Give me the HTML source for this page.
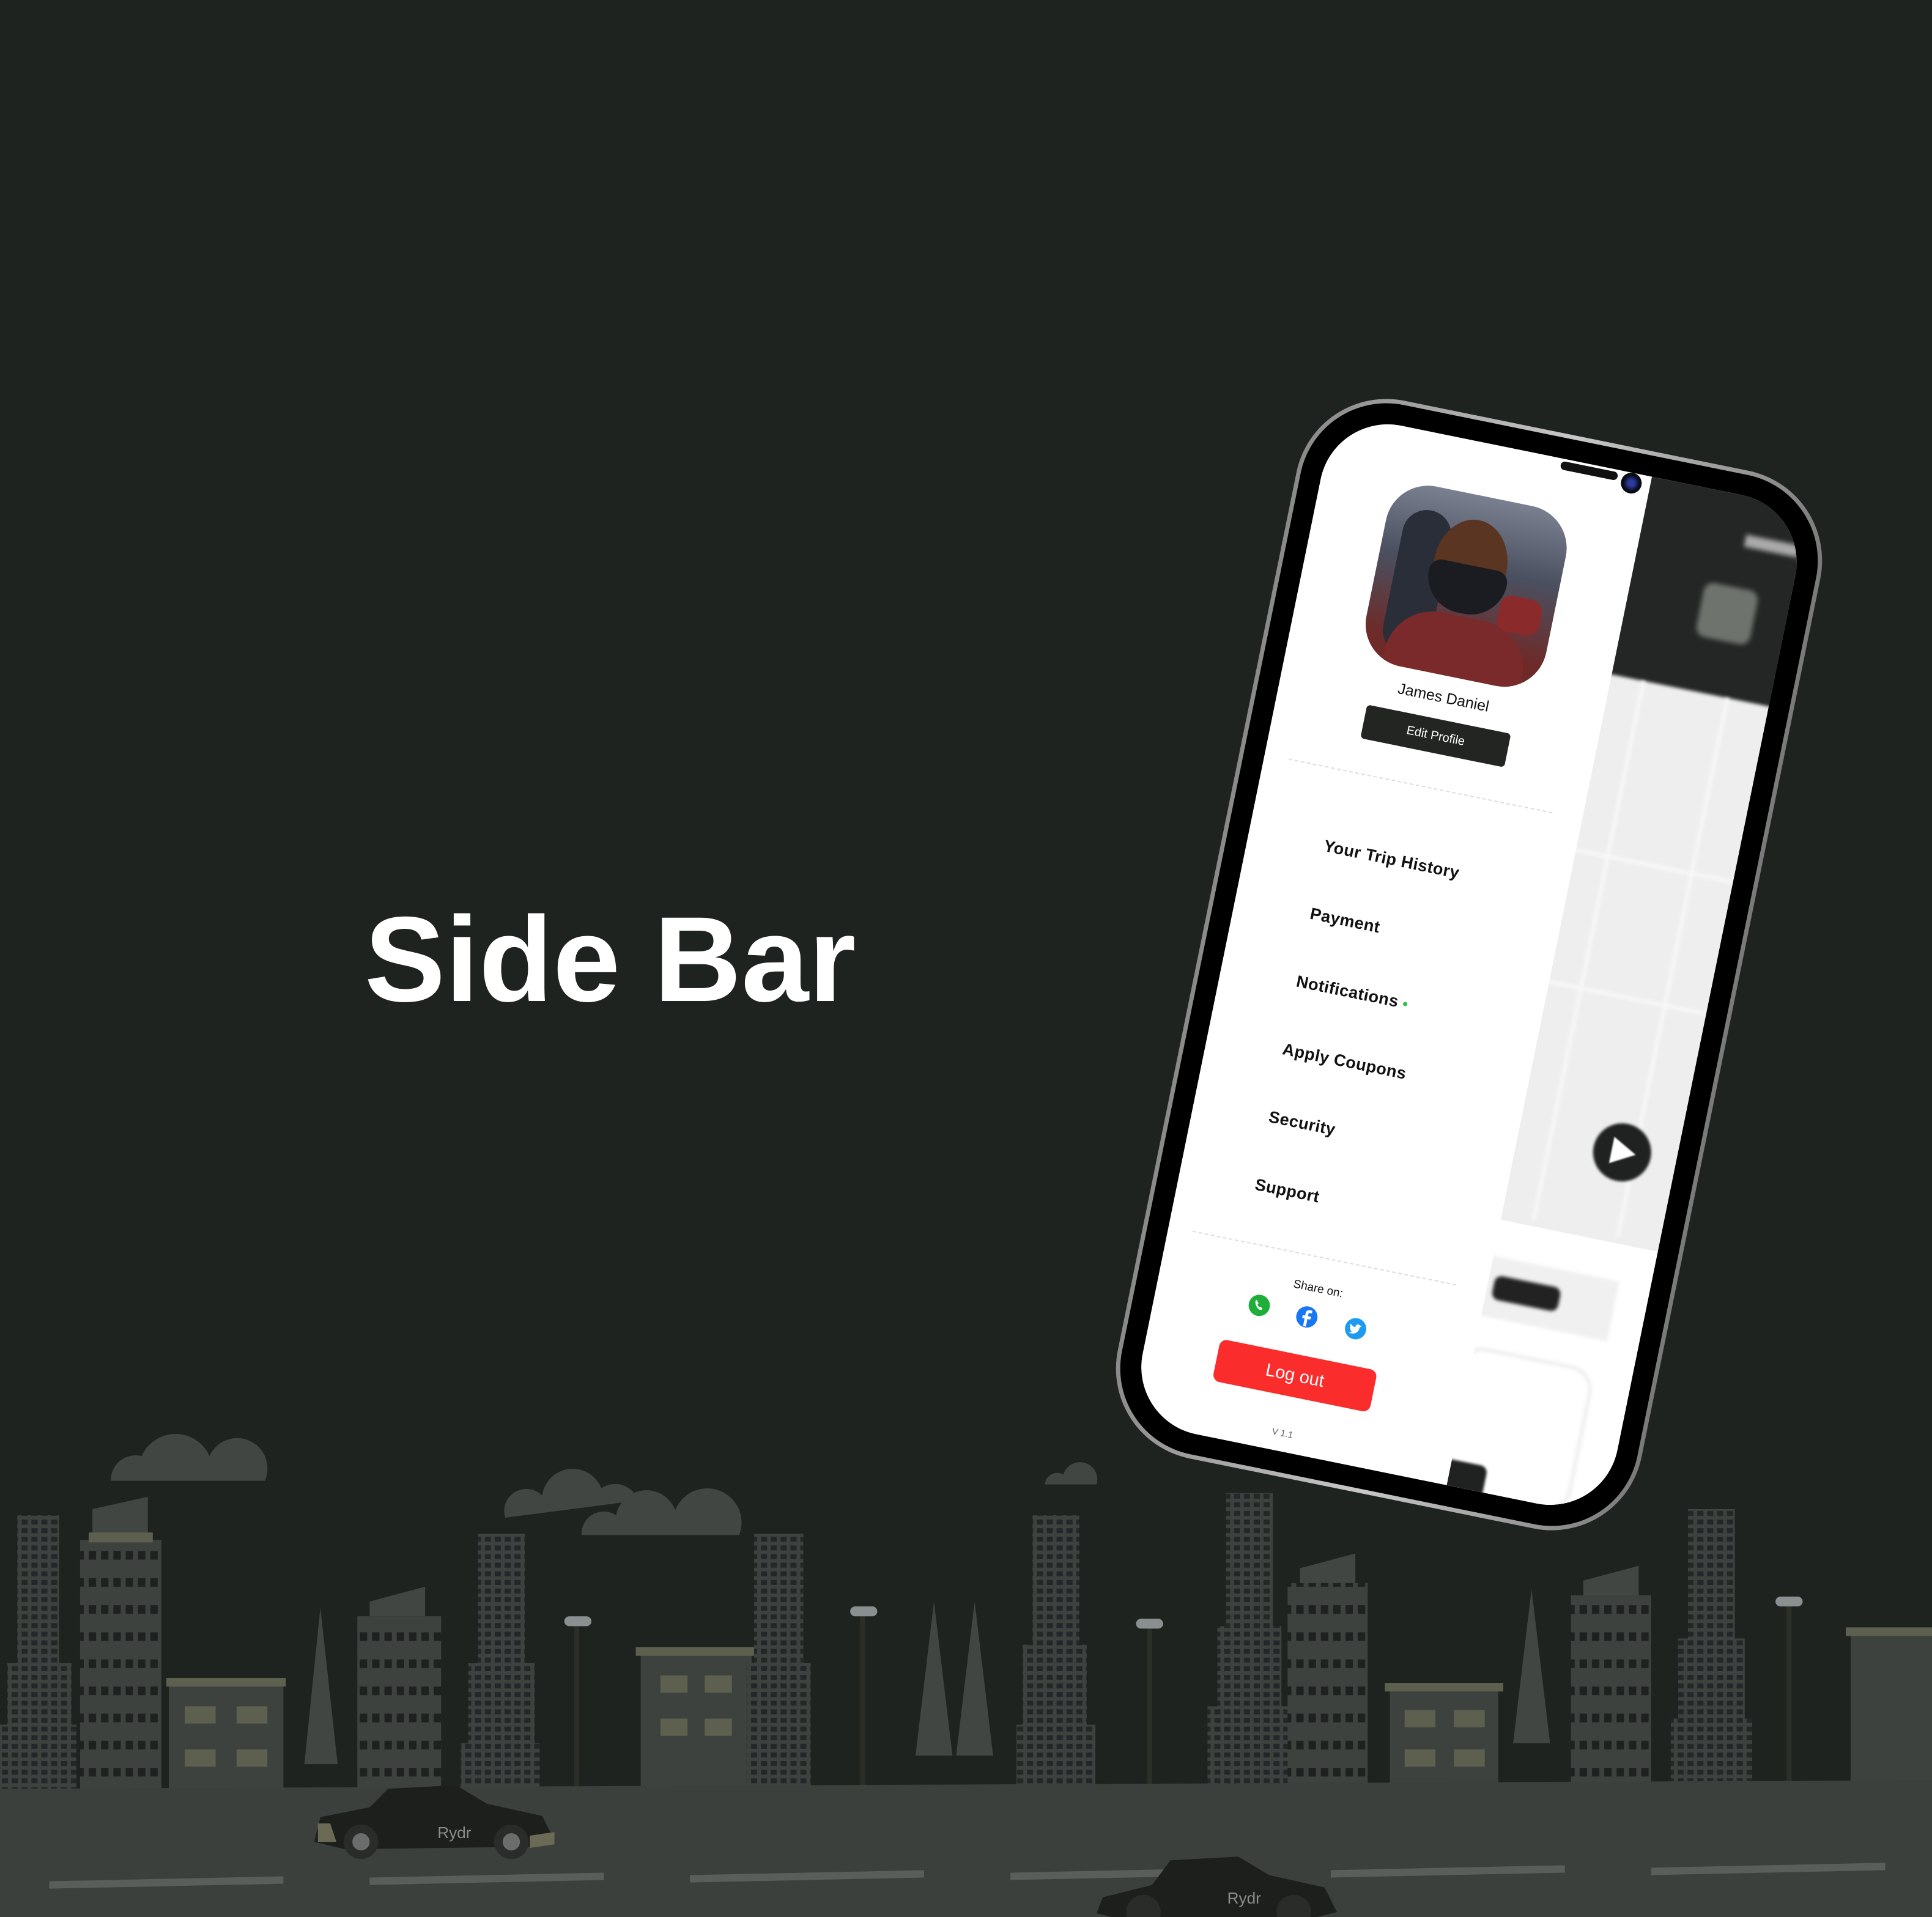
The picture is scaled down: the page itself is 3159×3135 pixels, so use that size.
<!DOCTYPE html>
<html><head><meta charset="utf-8"><style>
html,body{margin:0;padding:0}
body{width:3159px;height:3135px;background:#1f2320;position:relative;overflow:hidden;font-family:"Liberation Sans",sans-serif}
.title{position:absolute;left:596px;top:1470px;font-size:198px;font-weight:bold;color:#fff;line-height:1}
.city{position:absolute;left:0;top:2216px;width:3159px;height:919px;z-index:1}
.phone{position:absolute;left:1965px;top:695px;width:874px;height:1765px;transform:rotate(11.5deg);border-radius:150px;background:linear-gradient(90deg,#8a8a8a,#c8c8c8 50%,#7a7a7a);z-index:5}
.bez{position:absolute;inset:7px;border-radius:143px;background:#000}
.scr{position:absolute;left:34px;top:34px;right:34px;bottom:34px;border-radius:112px;background:#f4f4f4;overflow:hidden}
.abs{position:absolute}
.side{position:absolute;left:0;top:0;width:530px;height:100%;background:#fff}
.menu{position:absolute;left:125px;font-size:27px;color:#111;font-weight:bold;letter-spacing:.5px}
.dash{position:absolute;height:0;border-top:2px dashed #ddd}
</style></head><body>
<div class="title">Side Bar</div>

<div class="phone"><div class="bez"><div class="scr">
  <div class="abs" style="left:480px;top:0;width:360px;height:340px;background:#232624"></div>
  <div class="abs" style="left:480px;top:330px;width:360px;height:920px;background:#eeeeee;filter:blur(3px)"></div>
  <div class="abs" style="left:580px;top:330px;width:6px;height:900px;background:#f8f8f8;filter:blur(3px)"></div>
  <div class="abs" style="left:720px;top:330px;width:6px;height:900px;background:#f8f8f8;filter:blur(3px)"></div>
  <div class="abs" style="left:480px;top:620px;width:360px;height:6px;background:#f8f8f8;filter:blur(3px)"></div>
  <div class="abs" style="left:480px;top:840px;width:360px;height:6px;background:#f8f8f8;filter:blur(3px)"></div>
  <div class="abs" style="left:650px;top:150px;width:90px;height:90px;border-radius:16px;background:#6f736d;filter:blur(4px)"></div>
  <div class="abs" style="left:700px;top:62px;width:90px;height:20px;background:#aaa;filter:blur(4px)"></div>
  <div class="abs" style="left:655px;top:1045px;width:95px;height:95px;border-radius:50%;background:#1f2220;filter:blur(2px)"></div>
  <div class="abs" style="left:685px;top:1070px;width:0;height:0;border-left:40px solid #fff;border-top:22px solid transparent;border-bottom:22px solid transparent;filter:blur(1px)"></div>
  <div class="abs" style="left:480px;top:1240px;width:360px;height:520px;background:#fff"></div>
  <div class="abs" style="left:520px;top:1300px;width:220px;height:100px;background:#f0f0f0;filter:blur(3px)"></div>
  <div class="abs" style="left:540px;top:1330px;width:110px;height:40px;border-radius:12px;background:#222;filter:blur(3px)"></div>
  <div class="abs" style="left:510px;top:1450px;width:210px;height:230px;border-radius:40px;border:6px solid #eee;filter:blur(3px)"></div>
  <div class="abs" style="left:490px;top:1640px;width:100px;height:80px;border-radius:12px;background:#1f2220;filter:blur(2px)"></div>
  <div class="side"></div>
  <div class="abs" style="left:380px;top:4px;width:95px;height:14px;border-radius:8px;background:#111"></div>
  <div class="abs" style="left:482px;top:0;width:34px;height:34px;border-radius:50%;background:radial-gradient(circle,#2a3aa0 20%,#0a0a14 55%)"></div>
  <div class="abs" style="left:118px;top:86px;width:300px;height:300px;border-radius:70px;overflow:hidden;background:linear-gradient(180deg,#7a8090 0%,#4a5060 40%,#6e2a28 85%)">
    <div class="abs" style="left:30px;top:40px;width:80px;height:240px;background:#2a2e38;border-radius:40px"></div>
    <div class="abs" style="left:90px;top:40px;width:120px;height:150px;border-radius:50%;background:#5a3522"></div>
    <div class="abs" style="left:85px;top:115px;width:130px;height:80px;border-radius:20px 20px 60px 60px;background:#1a1c22"></div>
    <div class="abs" style="left:40px;top:200px;width:230px;height:120px;border-radius:80px 80px 0 0;background:#7a2a2a"></div>
    <div class="abs" style="left:210px;top:150px;width:70px;height:60px;background:#8b2a2a;border-radius:20px"></div>
  </div>
  <div class="abs" style="left:158px;top:408px;width:220px;text-align:center;font-size:25px;color:#111">James Daniel</div>
  <div class="abs" style="left:148px;top:458px;width:240px;height:56px;background:#222522;border-radius:6px;color:#fff;font-size:20px;text-align:center;line-height:56px">Edit Profile</div>
  <div class="dash" style="left:40px;top:570px;width:440px"></div>
  <div class="menu" style="top:683px">Your Trip History</div>
  <div class="menu" style="top:796px">Payment</div>
  <div class="menu" style="top:909px">Notifications <span style="display:inline-block;width:7px;height:7px;border-radius:50%;background:#2ec04a;vertical-align:middle"></span></div>
  <div class="menu" style="top:1022px">Apply Coupons</div>
  <div class="menu" style="top:1135px">Security</div>
  <div class="menu" style="top:1248px">Support</div>
  <div class="dash" style="left:40px;top:1358px;width:440px"></div>
  <div class="abs" style="left:160px;top:1400px;width:200px;text-align:center;font-size:19px;color:#111">Share on:</div>
  <svg class="abs" style="left:152px;top:1437px" width="38" height="38" viewBox="0 0 24 24"><circle cx="12" cy="12" r="11" fill="#1fae3a"/><path d="M8 7c-1 1-1 3 1 6s5 4 6 3l1-1-2-2-1 1c-1 0-3-2-3-3l1-1-2-2z" fill="#fff"/></svg>
  <svg class="abs" style="left:232px;top:1440px" width="38" height="38" viewBox="0 0 24 24"><circle cx="12" cy="12" r="11" fill="#1877f2"/><path d="M13 22v-8h3l.4-3H13V9c0-1 .3-1.6 1.7-1.6h1.7V4.7C16 4.6 15 4.5 14 4.5c-2.5 0-4 1.5-4 4V11H7.5v3H10v8z" fill="#fff"/></svg>
  <svg class="abs" style="left:314px;top:1443px" width="38" height="38" viewBox="0 0 24 24"><circle cx="12" cy="12" r="11" fill="#1d9bf0"/><path d="M18 8.5c-.5.2-1 .4-1.5.4.5-.3 1-.8 1.2-1.4-.5.3-1.1.5-1.700.6a2.6 2.6 0 0 0-4.5 2.4c-2.2-.1-4.1-1.2-5.4-2.8-.7 1.2-.3 2.7.8 3.5-.4 0-.8-.1-1.2-.3 0 1.3.9 2.4 2.1 2.6-.4.1-.8.1-1.2 0 .3 1 1.3 1.8 2.4 1.8-1.1.9-2.6 1.3-3.9 1.2 4.8 2.9 10.8-.3 10.7-6.5.5-.4.9-.8 1.2-1.3z" fill="#fff"/></svg>
  <div class="abs" style="left:120px;top:1522px;width:262px;height:70px;background:#fa2c2c;border-radius:12px;color:#fff;font-size:29px;text-align:center;line-height:70px">Log out</div>
  <div class="abs" style="left:200px;top:1645px;width:100px;text-align:center;font-size:15px;color:#666">V 1.1</div>
</div></div></div>

<svg class="city" viewBox="0 1100 1568 456" preserveAspectRatio="none">
  <defs>
    <pattern id="tw" width="8" height="7" patternUnits="userSpaceOnUse"><rect width="8" height="7" fill="#3d423e"/><rect x="1.5" y="1.5" width="5" height="4" fill="#23272a"/></pattern>
    <pattern id="zz" width="10" height="22" patternUnits="userSpaceOnUse"><rect width="10" height="22" fill="#3d423e"/><rect x="2" y="5" width="6" height="7" fill="#1e2120"/></pattern>
  </defs>
  <g fill="#414642">
    <path d="M90 1202a20 20 0 0 1 25-20a30 30 0 0 1 55 0a22 22 0 0 1 45 20z"/>
    <path d="M410 1232a18 18 0 0 1 30-18a25 25 0 0 1 48 -6a20 20 0 0 1 30 10z"/>
    <path d="M472 1246a18 18 0 0 1 28-16a25 25 0 0 1 48-4a20 20 0 0 1 52 20z"/>
    <path d="M848 1205a10 10 0 0 1 15-8a12 12 0 0 1 27 8z"/>
  </g>
  <g>
    <rect x="14" y="1230" width="34" height="225" fill="url(#tw)"/><rect x="6" y="1350" width="52" height="100" fill="url(#tw)"/><rect x="0" y="1400" width="62" height="55" fill="url(#tw)"/>
    <rect x="65" y="1250" width="66" height="205" fill="url(#zz)"/><path d="M75 1250v-25l45-10v35z" fill="#414642"/><rect x="72" y="1244" width="52" height="8" fill="#5d604e"/>
    <rect x="137" y="1365" width="93" height="90" fill="#3d423e"/><rect x="135" y="1362" width="97" height="7" fill="#5d604e"/>
    <rect x="150" y="1385" width="25" height="14" fill="#5d604e"/><rect x="192" y="1385" width="25" height="14" fill="#5d604e"/><rect x="150" y="1420" width="25" height="14" fill="#5d604e"/><rect x="192" y="1420" width="25" height="14" fill="#5d604e"/>
    <path d="M247 1432l13-127 14 127z" fill="#414642"/>
    <rect x="290" y="1312" width="68" height="143" fill="url(#zz)"/><path d="M300 1312v-12l45-12v24z" fill="#414642"/>
    <rect x="388" y="1245" width="38" height="110" fill="url(#tw)"/><rect x="380" y="1350" width="54" height="70" fill="url(#tw)"/><rect x="374" y="1415" width="64" height="40" fill="url(#tw)"/>
    <rect x="466" y="1318" width="4" height="137" fill="#2c2e28"/><rect x="458" y="1312" width="22" height="8" rx="4" fill="#8a9090"/>
    <rect x="520" y="1340" width="90" height="115" fill="#3d423e"/><rect x="516" y="1337" width="98" height="7" fill="#5d604e"/>
    <rect x="536" y="1360" width="22" height="14" fill="#5d604e"/><rect x="572" y="1360" width="22" height="14" fill="#5d604e"/><rect x="536" y="1395" width="22" height="14" fill="#5d604e"/><rect x="572" y="1395" width="22" height="14" fill="#5d604e"/>
    <rect x="612" y="1245" width="40" height="110" fill="url(#tw)"/><rect x="606" y="1350" width="52" height="105" fill="url(#tw)"/>
    <rect x="698" y="1310" width="4" height="145" fill="#2c2e28"/><rect x="690" y="1304" width="22" height="8" rx="4" fill="#8a9090"/>
    <path d="M743 1425l15-125 15 125zM776 1425l15-125 15 125z" fill="#414642"/>
    <rect x="838" y="1230" width="38" height="110" fill="url(#tw)"/><rect x="830" y="1335" width="52" height="70" fill="url(#tw)"/><rect x="825" y="1400" width="64" height="55" fill="url(#tw)"/>
    <rect x="931" y="1320" width="4" height="135" fill="#2c2e28"/><rect x="922" y="1314" width="22" height="8" rx="4" fill="#8a9090"/>
    <rect x="995" y="1212" width="38" height="110" fill="url(#tw)"/><rect x="988" y="1320" width="52" height="70" fill="url(#tw)"/><rect x="980" y="1385" width="66" height="70" fill="url(#tw)"/>
    <rect x="1045" y="1285" width="65" height="170" fill="url(#zz)"/><path d="M1055 1285v-12l45-12v24z" fill="#414642"/>
    <rect x="1128" y="1370" width="88" height="85" fill="#3d423e"/><rect x="1124" y="1366" width="96" height="7" fill="#5d604e"/>
    <rect x="1140" y="1388" width="25" height="14" fill="#5d604e"/><rect x="1180" y="1388" width="25" height="14" fill="#5d604e"/><rect x="1140" y="1420" width="25" height="14" fill="#5d604e"/><rect x="1180" y="1420" width="25" height="14" fill="#5d604e"/>
    <path d="M1228 1415l15-125 15 125z" fill="#414642"/>
    <rect x="1275" y="1295" width="65" height="160" fill="url(#zz)"/><path d="M1285 1295v-12l45-12v24z" fill="#414642"/>
    <rect x="1370" y="1225" width="38" height="110" fill="url(#tw)"/><rect x="1362" y="1330" width="54" height="70" fill="url(#tw)"/><rect x="1356" y="1395" width="66" height="60" fill="url(#tw)"/>
    <rect x="1450" y="1302" width="4" height="153" fill="#2c2e28"/><rect x="1441" y="1296" width="22" height="8" rx="4" fill="#8a9090"/>
    <rect x="1502" y="1325" width="66" height="130" fill="#3d423e"/><rect x="1498" y="1321" width="70" height="7" fill="#5d604e"/>
  </g>
  <path d="M0 1452L1568 1445V1556H0z" fill="#3c403d"/>
  <g fill="#5a5e5b">
    <path d="M40 1527l190-4v6l-190 4z"/><path d="M300 1524l190-4v6l-190 4z"/><path d="M560 1522l190-4v6l-190 4z"/><path d="M820 1520l190-4v6l-190 4z"/><path d="M1080 1518l190-4v6l-190 4z"/><path d="M1340 1516l190-4v6l-190 4z"/>
  </g>
  <g>
    <path d="M260 1475l40-8 15-15 55-3 25 15 45 10 10 20-20 5-150 2-25-6z" fill="#1c1f1c"/>
    <path d="M258 1480l10 0 5 15-15 0z M430 1490l20-3 0 10-20 3z" fill="#6a6a55"/>
    <circle cx="293" cy="1495" r="14" fill="#2a2c2a"/><circle cx="293" cy="1495" r="7" fill="#6a6d6b"/>
    <circle cx="415" cy="1495" r="14" fill="#2a2c2a"/><circle cx="415" cy="1495" r="7" fill="#6a6d6b"/>
    <text x="355" y="1492" font-size="13" fill="#8a8c86" font-family="Liberation Sans">Rydr</text>
    <path d="M895 1540l40-10 15-20 55-3 25 15 45 10 10 20-20 5-150 2-25-6z" fill="#1c1f1c"/>
    <circle cx="928" cy="1552" r="14" fill="#2a2c2a"/><circle cx="1050" cy="1552" r="14" fill="#2a2c2a"/>
    <text x="996" y="1545" font-size="13" fill="#8a8c86" font-family="Liberation Sans">Rydr</text>
  </g>
</svg>
</body></html>
